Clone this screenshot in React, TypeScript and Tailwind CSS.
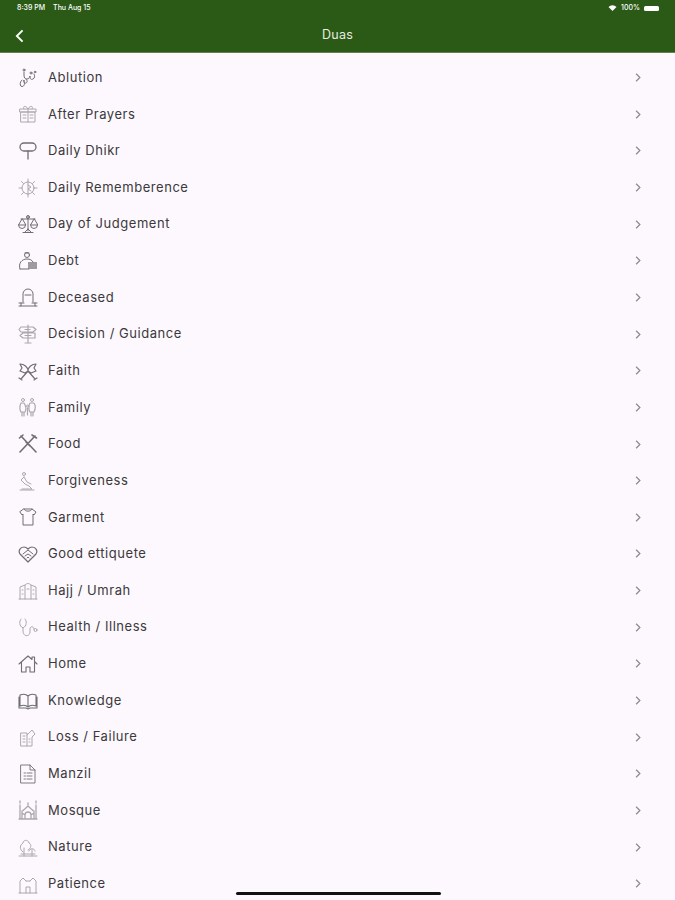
import type { ReactNode } from 'react';

type Dua = { name: string; faint?: boolean; icon: ReactNode };

// small hand drawn line icons, all on a 20x20 box
const duas: Dua[] = [
    { name: 'Ablution', icon: <><path d="M4 12c-2.500 2-2.500 6.500 0 6.500s3-3 2-6.500c-1 1 0 4 2 3s1-3 0-4M6 4v3c0 3 1 4 3 4s2-1 3-3c0 3 1 4 3 3s2-3 1-5" /><circle cx="6" cy="2" r="1" /><circle cx="13" cy="5" r="1" /><circle cx="17" cy="4" r=".8" /></> },
    { name: 'After Prayers', faint: true, icon: <><path d="M3 8h14v10H3zM2 5h16v3H2zM10 5v13M6 5C4 2 8 1 10 5c2-4 6-3 4 0" /><path d="M5 11h3M12 11h3M5 14h3M12 14h3" /></> },
    { name: 'Daily Dhikr', icon: <><rect x="2" y="2" width="16" height="8" rx="4" strokeWidth="1.300" /><path d="M10 10v8" strokeWidth="1.300" /></> },
    { name: 'Daily Rememberence', faint: true, icon: <><circle cx="10" cy="10" r="6" /><path d="M10 1v3M10 16v3M1 10h3M16 10h3M3.500 3.500l2 2M14.500 14.500l2 2M3.500 16.500l2-2M14.500 5.500l2-2M10 4v12M10 7l3 2-3 2 3 2" /></> },
    { name: 'Day of Judgement', icon: <><path d="M10 2v15M5 18.500h10M3 5h14M4 5L.5 11h7zM16 5l-3.500 6h7z" /><path d="M.5 11a3.500 3.500 0 0 0 7 0M12.500 11a3.500 3.500 0 0 0 7 0M10 15l-3 3M10 15l3 3" /><circle cx="10" cy="3" r="1.500" /></> },
    { name: 'Debt', icon: <><circle cx="9" cy="4" r="2.500" /><path d="M7 2h4M2 18c-2-6 2-10 7-10 3 0 5 1 6 3M2 18h9" /><path d="M10 11h9v7h-9z" fill="#7d7c7e" stroke="none" opacity=".75" /></> },
    { name: 'Deceased', icon: <><path d="M5 15V7a5 5 0 0 1 10 0v8M1 16h5M14 16h5M1 19h18M3 16v3M17 16v3M7 8h6" /></> },
    { name: 'Decision / Guidance', faint: true, icon: <><path d="M10 1v18M7 19h6M3 3h12l3 2.500L15 8H3L1 5.500zM17 9H5l-3 2.500L5 14h12z" strokeWidth="1.200" /><path d="M7 5.500h5M7 11.500h6" strokeWidth="1.200" /></> },
    { name: 'Faith', icon: <><path d="M2 3c4 0 8 3 8 7 0-4 4-7 8-7l-2 4 2 3-5 2-3-2-3 2-5-2 2-3zM3 18l7-8 7 8M1 17l3 2M16 19l3-2" strokeWidth="1.200" /></> },
    { name: 'Family', faint: true, icon: <><circle cx="5" cy="3" r="1.500" /><circle cx="14" cy="3" r="1.500" /><circle cx="9.500" cy="9" r="1" /><path d="M3 6c-2 3-1 8 0 9h4c1-2 1-6-1-9zM12 6c-2 3-1 8 0 9h4c1-2 2-6 0-9zM4 15v4M6 15v4M13 15v4M15 15v4M9.500 11v7" strokeWidth="1.200" /></> },
    { name: 'Food', icon: <><path d="M3 2l15 16M17 2L2 18M1.500 4L5 1M14 1l4.500 3M8 8l4 4" strokeWidth="1.600" /></> },
    { name: 'Forgiveness', faint: true, icon: <><circle cx="6" cy="3" r="1.500" /><path d="M6 6L3 9l4 4 4 2 3 3H4M6 6l3 5 4 2M2 19h14" /></> },
    { name: 'Garment', icon: <><path d="M6 2l8 0 4 3-2 3-1-1v11H5V7L4 8 2 5zM6 2c1 3 7 3 8 0" /></> },
    { name: 'Good ettiquete', icon: <><path d="M10 18L2 10C0 7 2 3 6 3c2 0 3 1 4 2 1-1 2-2 4-2 4 0 6 4 4 7z" strokeWidth="1.200" /><path d="M5 10l5-4 5 4M7 12l3-2 3 2M9 14l1-1 1 1" /></> },
    { name: 'Hajj / Umrah', faint: true, icon: <><path d="M2 18V6l5-2v14M7 4c2-2 4-2 6 0v14M13 4l5 2v12M1 18h18M4 9h1M15 9h1M9 8h2M4 13h1M15 13h1" /></> },
    { name: 'Health / Illness', faint: true, icon: <><path d="M3 2C1 4 1 9 5 11c4-2 4-7 2-9M5 11v3c0 6 7 6 7 1v-3c0-3 4-3 4 0" /><circle cx="17.500" cy="13" r="1.500" /></> },
    { name: 'Home', icon: <><path d="M1 10l9-8 4 3.500V3h2.500v4.500L19 10M3.500 8.500V18H8v-5h4v5h4.500V8.500" strokeWidth="1.100" /></> },
    { name: 'Knowledge', icon: <><path d="M10 5C8 3 5 3 2 4v11c3-1 6-1 8 1 2-2 5-2 8-1V4c-3-1-6-1-8 1zM10 5v11M1 6v11h7l2 1 2-1h7V6" strokeWidth="1.100" /></> },
    { name: 'Loss / Failure', faint: true, icon: <><path d="M3 6h6v13H3zM9 8l5-5 3 4-3 3v9H9M5 9h2M5 12h2M5 15h2M11 12h1M11 15h1" /></> },
    { name: 'Manzil', icon: <><path d="M3 1h9l5 5v13H3zM12 1v5h5M6 9h1.500M9 9h5M6 12h1.500M9 12h5M6 15h1.500M9 15h5" strokeWidth=".9" /></> },
    { name: 'Mosque', faint: true, icon: <><path d="M2 5v14M18 5v14M1 19h18M2 3V1M18 3V1M10 3v2M4 11c2-1 4-3 6-5 2 2 4 4 6 5v8H4zM7 19v-4a3 3 0 0 1 6 0v4M4 13l3 2M16 13l-3 2" strokeWidth="1.300" /></> },
    { name: 'Nature', faint: true, icon: <><path d="M5 15c-4-3-3-7 0-9 0-3 5-4 6 0 3 1 2 6-1 7M6 19v-8M14 19v-6M11 14c0-3 6-3 6 0M1 19h18M3 17h14" /></> },
    { name: 'Patience', faint: true, icon: <><path d="M2 19V7l3-3 3 3M18 19V7l-3-3-3 3M8 7h4M1 19h18M8 19v-6h4v6" /></> },
];

function Row({ name, icon, faint }: Dua) {
    return (
        <div className="flex h-[36.65px] shrink-0 items-center pl-[17.5px] pr-[34px]">
            <svg
                viewBox="0 0 20 20"
                fill="none"
                stroke="currentColor"
                strokeWidth="1"
                strokeLinecap="round"
                strokeLinejoin="round"
                className={`h-5 w-5 shrink-0 ${faint ? 'text-[#aaa8ab]' : 'text-[#6f6e70]'}`}
            >
                {icon}
            </svg>
            <span className="ml-[10.5px] flex-1 text-[13px] tracking-[0.55px] text-[#3a393b]">{name}</span>
            <svg viewBox="0 0 8 12" fill="none" stroke="#8a898b" strokeWidth="1.600" className="h-[9px] w-[6px]">
                <path d="M1.500 1l5 5-5 5" />
            </svg>
        </div>
    );
}

export default function App() {
    return (
        <div className="relative flex h-[900px] w-[675px] flex-col overflow-hidden bg-[#fdf8fe] font-['Inter','Liberation_Sans',sans-serif]">
            <header className="h-[53px] shrink-0 border-b border-[#5f8250] bg-[#2a5a15] text-white">
                <div className="flex h-[16px] items-center justify-between pl-[17px] pr-[16px] text-[7px] font-medium">
                    <div className="flex gap-[8px]">
                        <span>8:39 PM</span>
                        <span>Thu Aug 15</span>
                    </div>
                    <div className="flex items-center gap-[4px]">
                        <svg viewBox="0 0 12 9" className="h-[6px] w-[9px]" fill="white">
                            <path d="M0 3a8.500 8.500 0 0 1 12 0L6 9z" />
                        </svg>
                        <span>100%</span>
                        <span className="h-[5px] w-[15px] rounded-[1.500px] bg-white" />
                    </div>
                </div>
                <div className="flex h-[36px] items-center px-[15px] pt-[3px]">
                    <svg viewBox="0 0 10 16" fill="none" stroke="white" strokeWidth="2.200" className="h-[14px] w-[9px]">
                        <path d="M8.500 1.500L2 8l6.500 6.500" />
                    </svg>
                    <span className="flex-1 pr-[9px] text-center text-[12.5px] tracking-[0.3px] text-[#e6ece2]">Duas</span>
                </div>
            </header>
            <main className="flex flex-1 flex-col pt-[6.3px]">
                {duas.map((d) => (
                    <Row key={d.name} {...d} />
                ))}
            </main>
            <div className="absolute bottom-[5px] left-[236px] h-[3px] w-[205px] rounded-full bg-[#111]" />
        </div>
    );
}
